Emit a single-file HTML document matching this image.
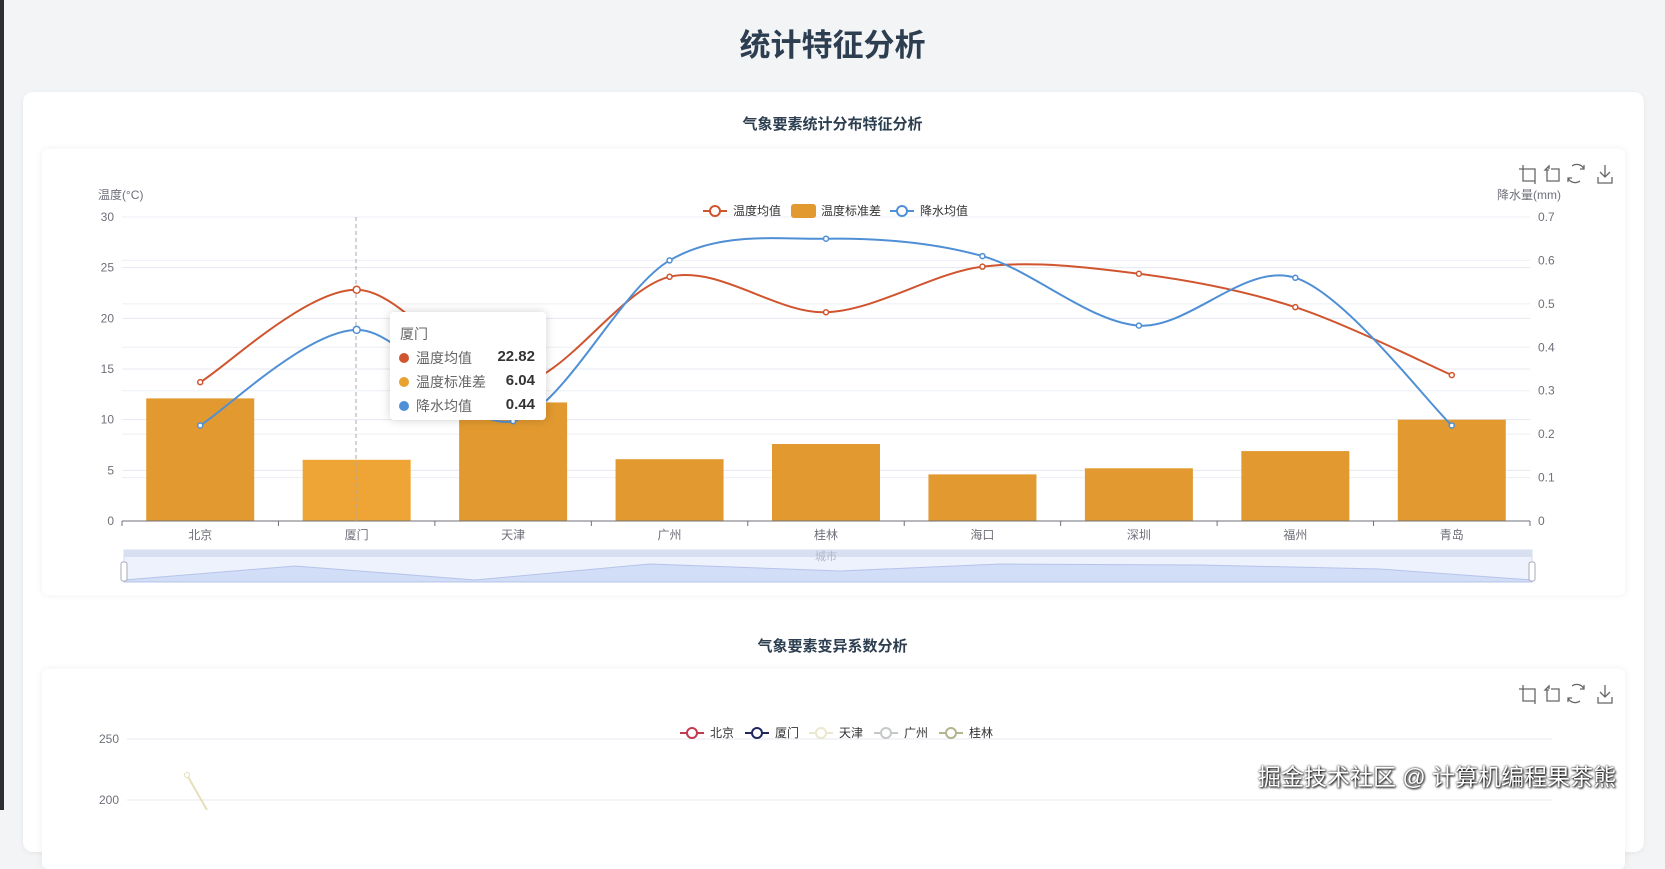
<!DOCTYPE html>
<html><head><meta charset="utf-8">
<style>
*{margin:0;padding:0;box-sizing:border-box}
body{width:1665px;height:810px;overflow:hidden;background:#f3f4f6;font-family:"Liberation Sans","Noto Sans CJK SC",sans-serif;position:relative}
.strip{position:absolute;left:0;top:0;width:4px;height:810px;background:#2b2e33}
.h1{position:absolute;top:20px;left:0;width:1665px;text-align:center;font-size:31px;font-weight:bold;color:#2c3e50}
.outer{position:absolute;left:23px;top:92px;width:1621px;height:760px;background:#fff;border-radius:10px;box-shadow:0 1px 6px rgba(0,0,0,.06)}
.t2{position:absolute;left:0;width:1665px;text-align:center;font-size:15px;font-weight:bold;color:#2c3e50}
.card{position:absolute;left:42px;width:1583px;background:#fff;border-radius:6px;box-shadow:0 0 8px rgba(0,0,0,.07)}
svg text{font-family:"Liberation Sans","Noto Sans CJK SC",sans-serif}
.tip{position:absolute;left:390px;top:312px;width:156px;height:108px;background:#fff;border-radius:4px;box-shadow:0 0 10px rgba(0,0,0,.18);font-size:14px;color:#666}
.tip .r{position:absolute;left:26px;width:130px}
.tip .r b{position:absolute;right:11px;color:#333;font-size:15px}
.tip .d{position:absolute;left:-17px;top:5px;width:10px;height:10px;border-radius:5px}
.wm{position:absolute;left:1258px;top:758px;font-size:23px;color:#fff;text-shadow:0 0 2px #000,1px 1px 2px #000;white-space:nowrap}
</style></head><body>
<div class="strip"></div>
<div class="h1">统计特征分析</div>
<div class="outer"></div>
<div class="t2" style="top:113px">气象要素统计分布特征分析</div>
<div class="card" style="top:149px;height:446px"></div>
<div class="t2" style="top:635px">气象要素变异系数分析</div>
<div class="card" style="top:669px;height:200px"></div>
<svg id="s" width="1665" height="810" style="position:absolute;left:0;top:0"></svg>
<div class="tip">
 <div style="position:absolute;left:10px;top:12px;color:#666">厦门</div>
 <div class="r" style="top:36px"><span class="d" style="background:#d0552f"></span>温度均值<b>22.82</b></div>
 <div class="r" style="top:60px"><span class="d" style="background:#e8a22f"></span>温度标准差<b>6.04</b></div>
 <div class="r" style="top:84px"><span class="d" style="background:#4f8fd6"></span>降水均值<b>0.44</b></div>
</div>
<div class="wm">掘金技术社区 @ 计算机编程果茶熊</div>
<script>
var s='',L=122,R=1530,Y0=521,Y30=217,cw=(R-L)/9;
var cities=['北京','厦门','天津','广州','桂林','海口','深圳','福州','青岛'];
var tm=[13.7,22.82,13.4,24.1,20.6,25.1,24.4,21.1,14.4];
var sd=[12.1,6.04,11.7,6.1,7.6,4.6,5.2,6.9,10.0];
var pr=[0.22,0.44,0.23,0.60,0.65,0.61,0.45,0.56,0.22];
function yl(v){return Y0-v*(Y0-Y30)/30}
function yr(v){return Y0-v*(Y0-Y30)/0.7}
function cx(i){return L+cw/2+i*cw}
for(var i=0;i<=6;i++){var y=yl(i*5);s+='<line x1="'+L+'" x2="'+R+'" y1="'+y+'" y2="'+y+'" stroke="#e4e8f0"/>';s+='<text x="'+(L-8)+'" y="'+(y+4)+'" font-size="12" fill="#6e7079" text-anchor="end">'+(i*5)+'</text>';}
for(var i=0;i<=7;i++){var y=yr(i/10);s+='<line x1="'+L+'" x2="'+R+'" y1="'+y+'" y2="'+y+'" stroke="#eceff5"/>';s+='<text x="'+(R+8)+'" y="'+(y+4)+'" font-size="12" fill="#6e7079">'+(i?(i/10).toFixed(1):0)+'</text>';}
s+='<text x="98" y="199" font-size="12" fill="#6e7079">温度(°C)</text><text x="1497" y="199" font-size="12" fill="#6e7079">降水量(mm)</text>';
for(var i=0;i<9;i++){var h=Y0-yl(sd[i]);s+='<rect x="'+(cx(i)-54)+'" y="'+yl(sd[i])+'" width="108" height="'+h+'" fill="'+(i==1?'#eea535':'#e2992f')+'"/>';
s+='<text x="'+cx(i)+'" y="539" font-size="12" fill="#6e7079" text-anchor="middle">'+cities[i]+'</text>';}
s+='<line x1="'+L+'" x2="'+R+'" y1="'+Y0+'" y2="'+Y0+'" stroke="#6e7079"/>';
for(var i=0;i<=9;i++){var x=L+i*cw;s+='<line x1="'+x+'" x2="'+x+'" y1="'+Y0+'" y2="'+(Y0+5)+'" stroke="#6e7079"/>';}
s+='<line x1="356" x2="356" y1="217" y2="521" stroke="#aaa" stroke-dasharray="4,3"/>';
function path(p){var d='M'+p[0][0]+','+p[0][1];for(var i=0;i<p.length-1;i++){var p0=p[Math.max(0,i-1)],p1=p[i],p2=p[i+1],p3=p[Math.min(p.length-1,i+2)];var k=0.16;d+=' C'+(p1[0]+(p2[0]-p0[0])*k)+','+(p1[1]+(p2[1]-p0[1])*k)+' '+(p2[0]-(p3[0]-p1[0])*k)+','+(p2[1]-(p3[1]-p1[1])*k)+' '+p2[0]+','+p2[1];}return d}
var a=tm.map(function(v,i){return [cx(i),yl(v)]}),b=pr.map(function(v,i){return [cx(i),yr(v)]});
s+='<path d="'+path(a)+'" fill="none" stroke="#d0552f" stroke-width="2"/>';
s+='<path d="'+path(b)+'" fill="none" stroke="#4f8fd6" stroke-width="2"/>';
a.forEach(function(p,i){s+='<circle cx="'+p[0]+'" cy="'+p[1]+'" r="'+(i==1?3.5:2.5)+'" fill="#fff" stroke="#d0552f" stroke-width="1.5"/>'});
b.forEach(function(p,i){s+='<circle cx="'+p[0]+'" cy="'+p[1]+'" r="'+(i==1?3.5:2.5)+'" fill="#fff" stroke="#4f8fd6" stroke-width="1.5"/>'});
function leg(x,y,c,t){return '<line x1="'+x+'" x2="'+(x+24)+'" y1="'+y+'" y2="'+y+'" stroke="'+c+'" stroke-width="2"/><circle cx="'+(x+12)+'" cy="'+y+'" r="5" fill="#fff" stroke="'+c+'" stroke-width="2"/><text x="'+(x+30)+'" y="'+(y+4)+'" font-size="12" fill="#333">'+t+'</text>'}
s+=leg(703,211,'#d0552f','温度均值');
s+='<rect x="791" y="204" width="25" height="14" rx="3" fill="#e2992f"/><text x="821" y="215" font-size="12" fill="#333">温度标准差</text>';
s+=leg(890,211,'#4f8fd6','降水均值');
var icons='<path d="M1519 169h4v-4M1523 169v12h12M1523 169h12v12M1535 181v3"/>'+
'<path d="M1545 170l4-4v3M1549 166l-4 4h4M1547 170v11h12v-12h-8"/>'+
'<path d="M1572 166a8 8 0 0 1 12 3M1584 165v4h-4M1580 181a8 8 0 0 1-12-3M1568 182v-4h4"/>'+
'<path d="M1605 165v12M1600 172l5 5 5-5M1598 177v6h14v-6"/>';
s+='<g fill="none" stroke="#666" stroke-width="1.3">'+icons+'</g>';
s+='<rect x="124" y="550" width="1408" height="32" fill="#eef2fc" stroke="#d2dbee"/>';
s+='<rect x="124" y="550" width="1408" height="7" fill="#d7dff0"/>';
var dz='M124,582 L124,580';
var pts=[[124,580],[295,566],[475,580],[650,564],[840,571],[1000,564],[1200,565],[1380,569],[1532,580]];
pts.forEach(function(p){dz+=' L'+p[0]+','+p[1]});dz+=' L1532,582Z';
s+='<path d="'+dz+'" fill="#d2ddf7" stroke="#b6c4ea" stroke-width="1"/>';
s+='<text x="826" y="560" font-size="11" fill="#b0b8cc" text-anchor="middle">城市</text>';
s+='<rect x="121" y="562" width="6" height="19" rx="2" fill="#fff" stroke="#aab"/><rect x="1529" y="562" width="6" height="19" rx="2" fill="#fff" stroke="#aab"/>';
s+='<g fill="none" stroke="#666" stroke-width="1.3" transform="translate(0,520)">'+icons+'</g>';
s+='<line x1="127" x2="1552" y1="739" y2="739" stroke="#e4e8f0"/><line x1="127" x2="1552" y1="800" y2="800" stroke="#e4e8f0"/>';
s+='<text x="119" y="743" font-size="12" fill="#6e7079" text-anchor="end">250</text><text x="119" y="804" font-size="12" fill="#6e7079" text-anchor="end">200</text>';
s+=leg(680,733,'#c23a50','北京')+leg(745,733,'#1f2660','厦门')+leg(809,733,'#ece8cf','天津')+leg(874,733,'#c5c7c9','广州')+leg(939,733,'#b2b48e','桂林');
s+='<line x1="187" y1="775" x2="207" y2="810" stroke="#e6dfb8" stroke-width="2"/><circle cx="187" cy="775" r="2.5" fill="#fff" stroke="#e6dfb8"/>';
document.getElementById('s').innerHTML=s;
</script>
</body></html>
